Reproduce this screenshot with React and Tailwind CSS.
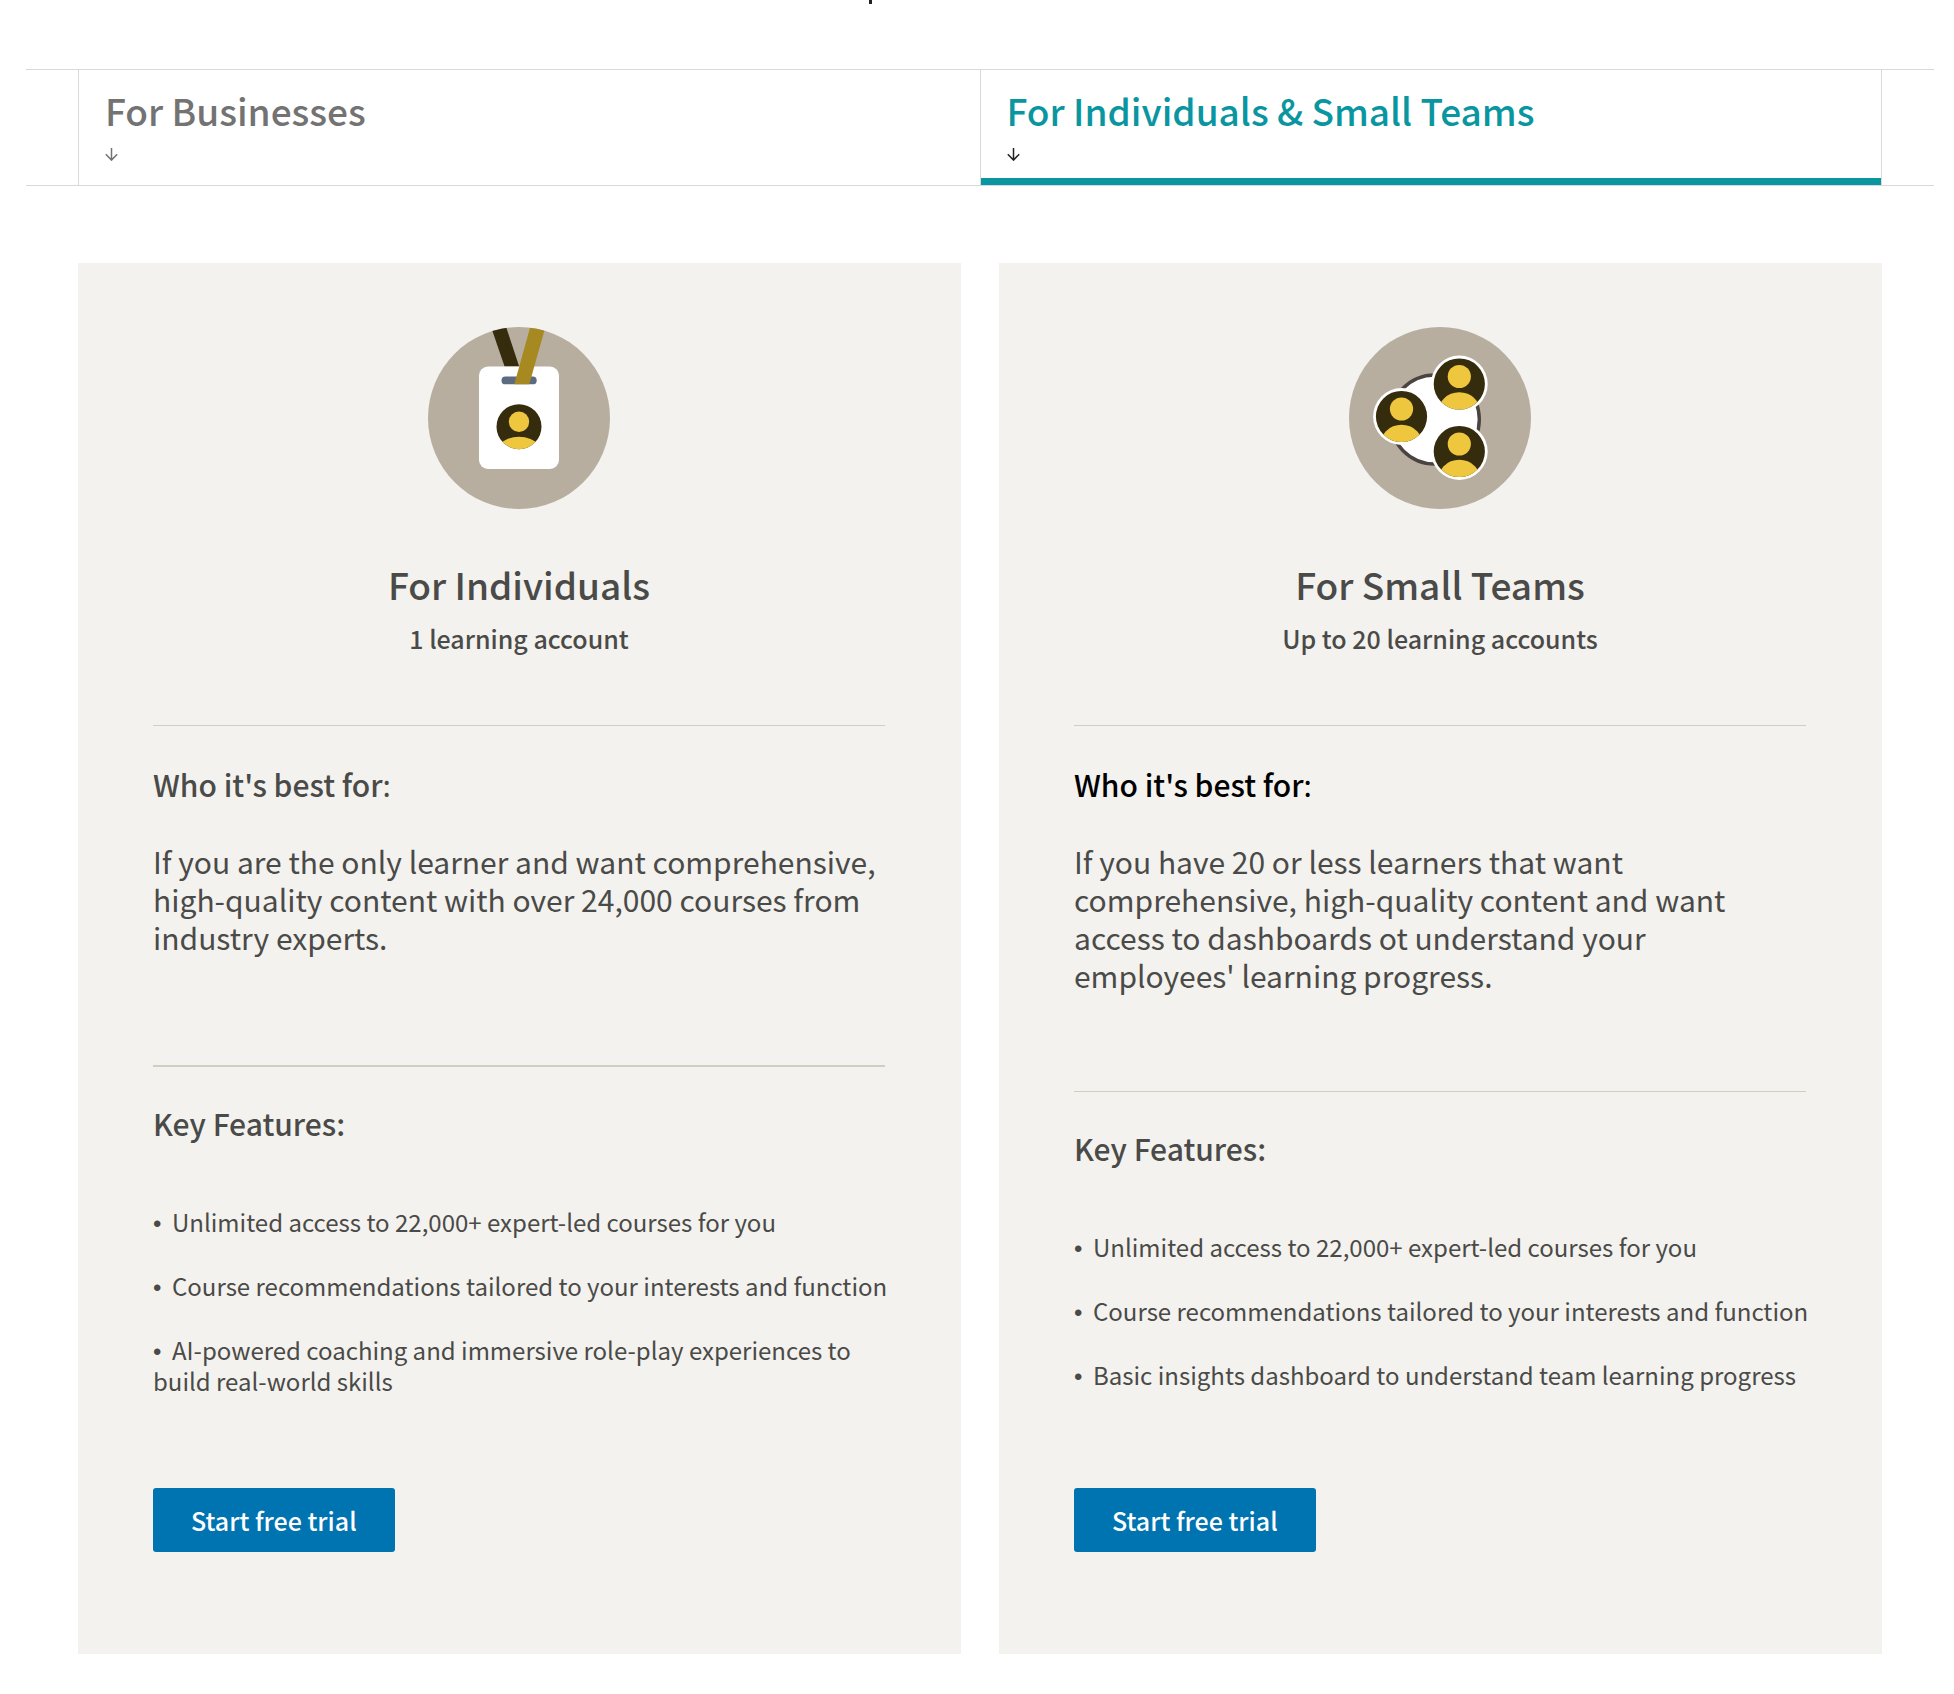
import { useState } from "react";

const tabs = [
  { id: "businesses", label: "For Businesses" },
  { id: "individuals", label: "For Individuals & Small Teams" },
];

const plans = [
  {
    id: "individuals",
    title: "For Individuals",
    accounts: "1 learning account",
    summary:
      "If you are the only learner and want comprehensive, high-quality content with over 24,000 courses from industry experts.",
    features: [
      "Unlimited access to 22,000+ expert-led courses for you",
      "Course recommendations tailored to your interests and function",
      "AI-powered coaching and immersive role-play experiences to build real-world skills",
    ],
  },
  {
    id: "teams",
    title: "For Small Teams",
    accounts: "Up to 20 learning accounts",
    summary:
      "If you have 20 or less learners that want comprehensive, high-quality content and want access to dashboards ot understand your employees' learning progress.",
    features: [
      "Unlimited access to 22,000+ expert-led courses for you",
      "Course recommendations tailored to your interests and function",
      "Basic insights dashboard to understand team learning progress",
    ],
  },
];

const ArrowDown = () => (
  <svg className="block size-[13px]" viewBox="0 0 13 13" fill="none" stroke="currentColor" strokeWidth="1.5" aria-hidden="true">
    <path d="M6.5 0v12M0.8 6.2l5.7 5.9 5.7-5.9" />
  </svg>
);

const BadgeIcon = () => (
  <svg className="size-[182px]" viewBox="0 0 182 182" aria-hidden="true">
    <clipPath id="badge-disc">
      <circle cx="91" cy="91" r="91" />
    </clipPath>
    <clipPath id="badge-face">
      <circle cx="91" cy="99.7" r="22.5" />
    </clipPath>
    <circle cx="91" cy="91" r="91" fill="#b8ae9f" />
    <path d="M62.7 -1H77.8L91.2 39.5H76.6z" fill="#352b0d" clipPath="url(#badge-disc)" />
    <rect x="51" y="39.5" width="80" height="102.5" rx="9" fill="#fff" />
    <rect x="73.5" y="49.5" width="35.2" height="7.8" rx="3.9" fill="#5b6b80" />
    <path d="M102.5 -1H117.7L101.3 57.3H86.3z" fill="#a68a21" clipPath="url(#badge-disc)" />
    <circle cx="91" cy="99.7" r="22.5" fill="#352b0d" />
    <g clipPath="url(#badge-face)" fill="#efc73f">
      <circle cx="91" cy="94.7" r="10.2" />
      <circle cx="91" cy="139.7" r="30" />
    </g>
  </svg>
);

const Member = ({ x, y }) => (
  <g transform={`translate(${x} ${y})`}>
    <circle r="28.4" fill="#fff" />
    <circle r="25.6" fill="#352b0d" />
    <g clipPath="url(#member-face)" fill="#efc73f">
      <circle cy="-7.5" r="11.6" />
      <circle cy="30.2" r="22" />
    </g>
  </g>
);

const TeamIcon = () => (
  <svg className="size-[182px]" viewBox="0 0 182 182" aria-hidden="true">
    <clipPath id="member-face">
      <circle r="25.6" />
    </clipPath>
    <circle cx="91" cy="91" r="91" fill="#b8ae9f" />
    <circle cx="85.8" cy="92.5" r="44.5" fill="#fff" stroke="#4a4340" strokeWidth="3.4" />
    <Member x={110.3} y={57} />
    <Member x={52.5} y={89.5} />
    <Member x={110.3} y={124.5} />
  </svg>
);

const PlanCard = ({ plan }) => {
  const isTeams = plan.id === "teams";

  return (
    <section className="flex flex-1 flex-col bg-[#f3f2ee] pt-16 pr-[76px] pb-[102px] pl-[75px]">
      <div className="flex flex-col items-center text-center">
        {isTeams ? <TeamIcon /> : <BadgeIcon />}
        <h2 className="mt-[51px] text-[37px] leading-[48px] font-medium">{plan.title}</h2>
        <p className="mt-[15px] text-[25px] leading-[31px] font-medium">{plan.accounts}</p>
      </div>

      <hr className="mt-[71px] border-[#d3cdc0]" />

      <h3 className={`mt-[39px] text-[30px] leading-[38px] ${isTeams ? "text-black" : ""}`}>
        <span className="font-medium">Who it's best for</span>:
      </h3>
      <p className="mt-[39px] text-[30px] leading-[38px]">{plan.summary}</p>

      <hr className={isTeams ? "mt-[97px] border-[#d3cdc0]" : "mt-[109px] border-t-2 border-[#d3cdc0]"} />

      <h3 className="mt-[37px] text-[30px] leading-[38px] font-medium">Key Features:</h3>
      <ul className="mt-16 -mr-5 mb-[92px] space-y-[33px] text-[24px] leading-[31px]">
        {plan.features.map((feature) => (
          <li key={feature}>
            <span className="inline-block w-[19px] font-['Liberation_Sans',sans-serif] leading-none">•</span>
            {feature}
          </li>
        ))}
      </ul>

      <button
        type="button"
        className="mt-auto h-16 self-start rounded-[3px] bg-[#0073b1] px-[38px] text-[25px] leading-[31px] font-medium text-white"
      >
        Start free trial
      </button>
    </section>
  );
};

const App = () => {
  const [activeTab, setActiveTab] = useState("individuals");

  return (
    <main className="bg-white pb-10 font-['Noto_Sans_CJK_SC',sans-serif] text-[#4a4a48]">
      {/* Tail of the section heading above the tabs */}
      <div className="ml-[869px] h-1 w-[3px] bg-[#222222]" />

      <div role="tablist" className="mt-[65px] mr-5 ml-[26px] flex border-y border-[#d9d9d9] px-[52px]">
        {tabs.map((tab) => {
          const active = tab.id === activeTab;
          return (
            <button
              key={tab.id}
              type="button"
              role="tab"
              aria-selected={active}
              onClick={() => setActiveTab(tab.id)}
              className="flex flex-1 flex-col border-l border-[#d9d9d9] text-left last:border-r"
            >
              <span className={`px-[26px] pt-4 text-[37px] leading-[48px] font-medium ${active ? "text-[#0a96a0]" : "text-[#737373]"}`}>
                {tab.label}
              </span>
              <span className={`mt-[14px] px-[26px] ${active ? "text-[#222222]" : "text-[#737373]"}`}>
                <ArrowDown />
              </span>
              <span className={`mt-[17px] h-[7px] w-full ${active ? "bg-[#0a96a0]" : ""}`} />
            </button>
          );
        })}
      </div>

      <div className="mt-[77px] mr-[72px] ml-[78px] flex gap-[38px]">
        {plans.map((plan) => (
          <PlanCard key={plan.id} plan={plan} />
        ))}
      </div>
    </main>
  );
};

export default App;
